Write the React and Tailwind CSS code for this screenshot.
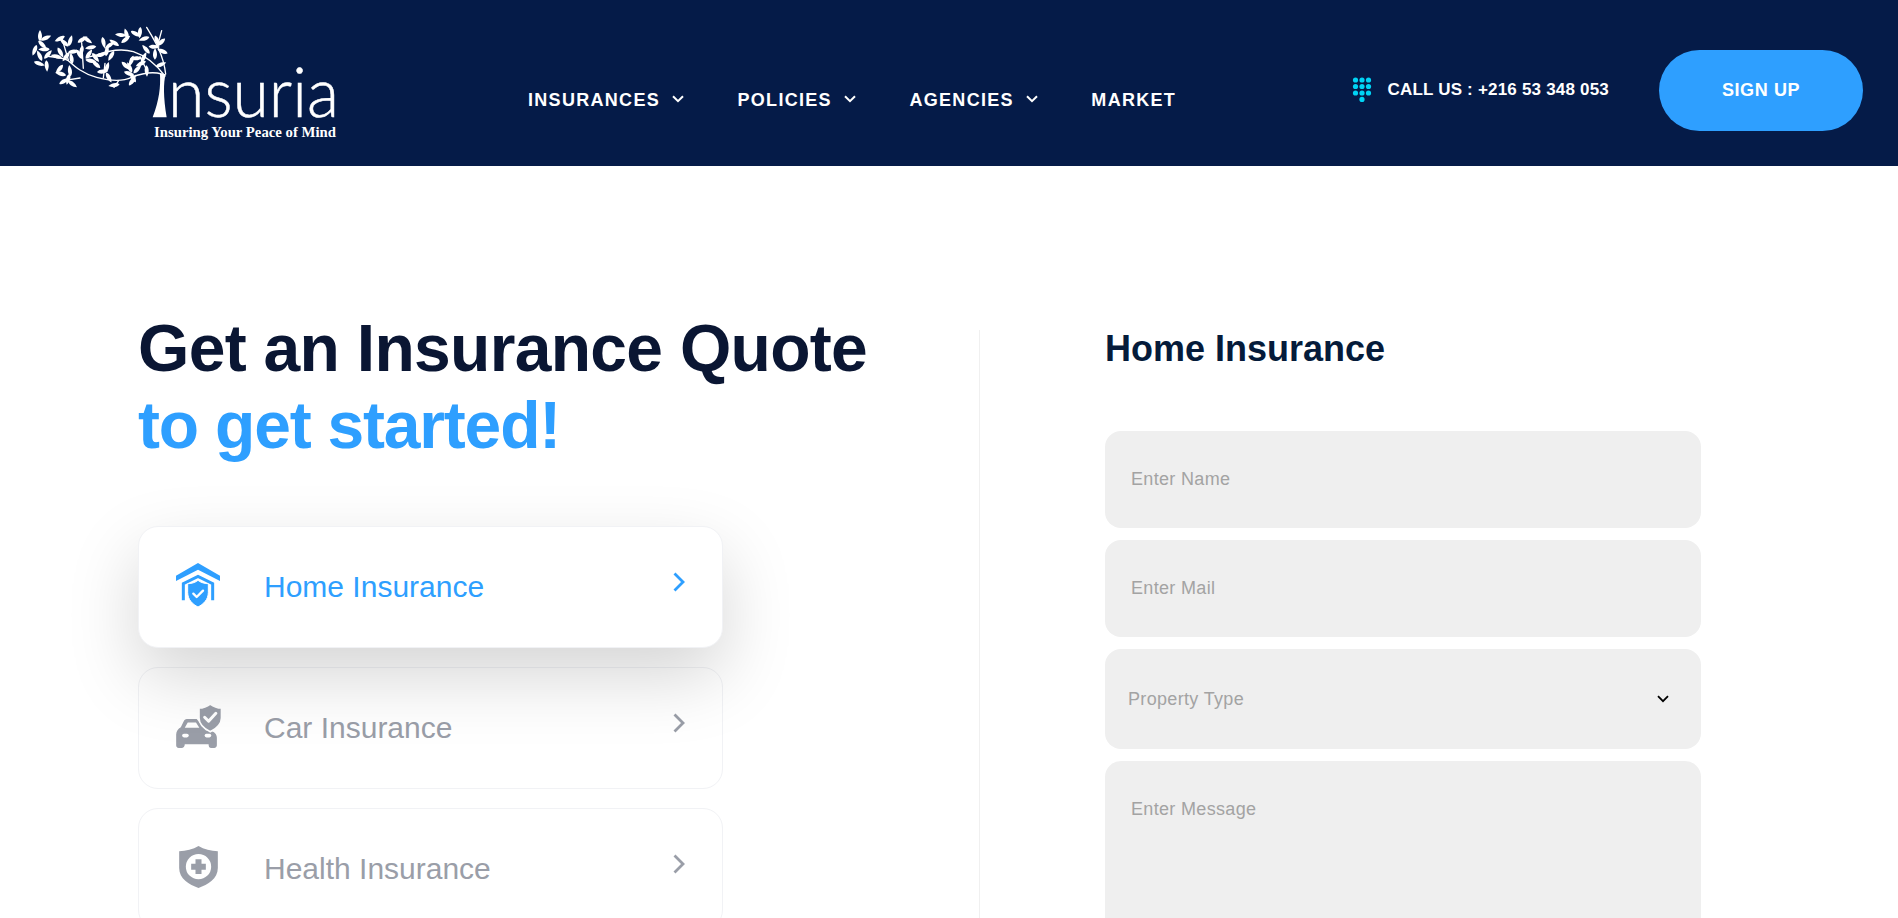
import React from "react";

const leaves = [
  [120,110],[135,115],[125,132],[105,148],[135,148],[120,170],[142,166],[115,190],[140,195],
  [182,115],[195,130],[210,125],[218,155],[180,155],[200,168],[172,170],[215,178],
  [245,120],[260,118],[245,150],[275,142],[240,165],[265,165],[270,182],
  [310,125],[330,135],[345,130],[320,155],[300,165],[285,170],[335,165],
  [365,105],[380,105],[375,120],[405,100],[420,95],[435,115],[440,150],[430,175],[460,140],[470,120],[485,125],[490,155],[465,165],[480,195],
  [375,195],[395,180],[410,175],[390,205],[410,210],[385,220],[440,210],[425,190],
  [290,195],[320,205],[305,215],[325,230],
  [180,205],[185,222],[210,215],[190,245],[215,250],[205,235],
  [345,255],[400,235],[395,245],
];

function Logo() {
  return (
    <svg viewBox="0 0 340 166" className="w-[340px] h-[166px] shrink-0">
      <g transform="scale(0.3333)" fill="none" stroke="#fff" strokeWidth="4" strokeLinecap="round">
        <path d="M495 228C470 195 440 168 400 155C370 146 330 150 290 165L262 172" />
        <path d="M485 222C450 212 420 222 395 232C365 246 320 240 290 232C250 222 225 200 205 182C190 172 160 172 140 168" />
        <path d="M440 82C460 115 490 160 497 222M485 92L474 132" />
        <path d="M245 128L250 205M185 112L205 180M190 242L240 234M315 190L310 234M342 262L356 242M398 248L406 226M420 170L440 210" />
        {leaves.map(([x, y], i) => (
          <path
            key={i}
            d="M0 14C8 7 8 -8 0 -20C-8 -8 -8 7 0 14Z"
            fill="#fff"
            stroke="none"
            transform={`translate(${x} ${y}) rotate(${(i * 67) % 360})`}
          />
        ))}
        <path d="M497 222C490 250 490 290 500 352H458C478 300 482 260 480 222Z" fill="#fff" stroke="none" />
      </g>
      <text x="168" y="117" textLength="171" lengthAdjust="spacingAndGlyphs" fontFamily="Lato, sans-serif" fontSize="68" fontWeight="300" stroke="#fff" strokeWidth="0.5" fill="#fff">nsuria</text>
      <text x="154" y="137" textLength="182" lengthAdjust="spacingAndGlyphs" fontFamily="'Liberation Serif', serif" fontSize="14" fontWeight="700" fill="#fff">Insuring Your Peace of Mind</text>
    </svg>
  );
}

function Chevron({ className }) {
  return (
    <svg viewBox="0 0 12 20" className={className} fill="none" stroke="currentColor" strokeWidth="2.8">
      <path d="M1.5 1.5L10 10L1.5 18.5" />
    </svg>
  );
}

function NavCaret() {
  return (
    <svg viewBox="0 0 12 8" className="w-3 h-2 mb-0.5" fill="none" stroke="currentColor" strokeWidth="2">
      <path d="M1 1.2L6 6.2L11 1.2" />
    </svg>
  );
}

function HomeIcon() {
  return (
    <svg viewBox="0 0 132 132" className="w-11 h-11">
      <path d="M66 0L132 38V54L66 20L0 54V38Z" fill="#2e9fff" />
      <path d="M22 112V62L66 40L110 62V112" fill="none" stroke="#2e9fff" strokeWidth="9" />
      <path d="M66 52C76 60 88 62 97 62V88C97 110 82 124 66 132C50 124 35 110 35 88V62C44 62 56 60 66 52Z" fill="#2e9fff" stroke="#fff" strokeWidth="3" />
      <path d="M52 92L62 102L81 83" fill="none" stroke="#fff" strokeWidth="7" strokeLinecap="round" strokeLinejoin="round" />
    </svg>
  );
}

function CarIcon() {
  return (
    <svg viewBox="0 0 138 133" className="w-[46px] h-11">
      <path d="M8 133C2 133 0 129 0 125V92C0 82 6 74 14 70L24 50C27 46 31 45 36 45H62L90 80H104C114 84 123 90 123 102V125C123 129 120 133 115 133H106C100 133 98 129 98 122H26C26 129 22 133 16 133Z" fill="#9a9ea8" />
      <path d="M26 72L35 56H60L70 72Z" fill="#fff" />
      <rect x="18" y="90" width="20" height="11" rx="5.5" fill="#fff" />
      <rect x="86" y="90" width="20" height="11" rx="5.5" fill="#fff" />
      <path d="M103 0C112 7 126 12 137 12V42C137 62 122 74 103 84C84 74 69 62 69 42V12C80 12 94 7 103 0Z" fill="#9a9ea8" stroke="#fff" strokeWidth="5" />
      <path d="M86 40L98 52L120 28" fill="none" stroke="#fff" strokeWidth="9" strokeLinecap="round" strokeLinejoin="round" />
    </svg>
  );
}

function HealthIcon() {
  return (
    <svg viewBox="0 0 116 126" className="w-[39px] h-[42px] ml-[3px]">
      <path d="M58 0C74 10 96 15 116 16V66C116 98 86 116 58 126C30 116 0 98 0 66V16C20 15 42 10 58 0Z" fill="#9a9ea8" />
      <circle cx="58" cy="62" r="38" fill="#fff" />
      <path d="M49 40H67V53H80V71H67V84H49V71H36V53H49Z" fill="#9a9ea8" />
    </svg>
  );
}

function Card({ icon, label, active }) {
  return (
    <div
      className={
        "flex items-center h-[122px] rounded-[20px] border border-[#f1f2f5] pr-[37px] " +
        (active ? "relative z-10 bg-white text-[#2e9fff] shadow-[0_28px_70px_rgba(0,0,0,0.17)]" : "text-[#9a9ea8]")
      }
    >
      <div className="w-[125px] pl-[37px] mb-1 flex items-center shrink-0">{icon}</div>
      <span className="flex-1 text-[30px] leading-none">{label}</span>
      <Chevron className="w-3 h-5 mb-[10px]" />
    </div>
  );
}

const fieldClass =
  "w-full bg-[#efefef] rounded-2xl outline-none text-[18px] tracking-[0.33px] text-[#a3a3a3] placeholder:text-[#a3a3a3] placeholder:opacity-100";

export default function App() {
  return (
    <div className="h-screen overflow-hidden bg-white font-['Liberation_Sans',Arial,sans-serif]">
      <header className="h-[166px] bg-[#051b48] flex items-start text-white pr-[35px]">
        <Logo />
        <nav className="flex items-center gap-[53.5px] ml-[188px] mt-[90px] text-[18px] leading-5 font-bold tracking-[1.3px]">
          <a className="flex items-center gap-3">INSURANCES <NavCaret /></a>
          <a className="flex items-center gap-3">POLICIES <NavCaret /></a>
          <a className="flex items-center gap-3">AGENCIES <NavCaret /></a>
          <a>MARKET</a>
        </nav>
        <div className="ml-auto mt-[77px] flex items-center gap-[15px]">
          <svg viewBox="0 0 20 25" className="w-5 h-[25px]" fill="#00d4f5">
            {[3.5, 10, 16.5].flatMap((x) => [3, 9.5, 16].map((y) => <circle key={x + "-" + y} cx={x} cy={y} r="2.6" />))}
            <circle cx="10" cy="22.4" r="2.6" />
          </svg>
          <span className="text-[17px] font-bold tracking-[0.2px]">CALL US : +216 53 348 053</span>
        </div>
        <button className="ml-[50px] mt-[50px] w-[204px] h-[81px] rounded-[41px] bg-[#2e9fff] text-[18px] font-bold tracking-[0.6px]">SIGN UP</button>
      </header>

      <main className="flex pt-[144px]">
        <section className="ml-[138px] w-[841px] shrink-0">
          <h1 className="text-[66px] leading-[77px] font-bold tracking-[-0.7px] text-[#0a1633]">
            Get an Insurance Quote
            <br />
            <span className="text-[#2e9fff] tracking-[-1.2px]">to get started!</span>
          </h1>
          <div className="mt-[62px] w-[585px] flex flex-col gap-[19px]">
            <Card icon={<HomeIcon />} label="Home Insurance" active />
            <Card icon={<CarIcon />} label="Car Insurance" />
            <Card icon={<HealthIcon />} label="Health Insurance" />
          </div>
        </section>
        <div className="w-px mt-5 h-[600px] bg-[#f0f0f0] shrink-0" />
        <section className="ml-[125px] w-[596px] shrink-0">
          <h2 className="mt-[19px] text-[36px] leading-10 font-bold text-[#051b3a]">Home Insurance</h2>
          <form className="mt-[62px] flex flex-col gap-3">
            <input className={fieldClass + " h-[97px] pl-[26px]"} placeholder="Enter Name" />
            <input className={fieldClass + " h-[97px] pl-[26px]"} placeholder="Enter Mail" />
            <div className="relative">
              <select className={fieldClass + " h-[100px] pl-[23px] appearance-none block"} defaultValue="">
                <option value="">Property Type</option>
              </select>
              <svg viewBox="0 0 12 8" className="absolute right-[32px] top-[46px] w-3 h-2" fill="none" stroke="#000" strokeWidth="1.8">
                <path d="M1 1.2L6 6.2L11 1.2" />
              </svg>
            </div>
            <textarea className={fieldClass + " h-[200px] pl-[26px] pt-[35px] resize-none block"} placeholder="Enter Message" />
          </form>
        </section>
      </main>
    </div>
  );
}
